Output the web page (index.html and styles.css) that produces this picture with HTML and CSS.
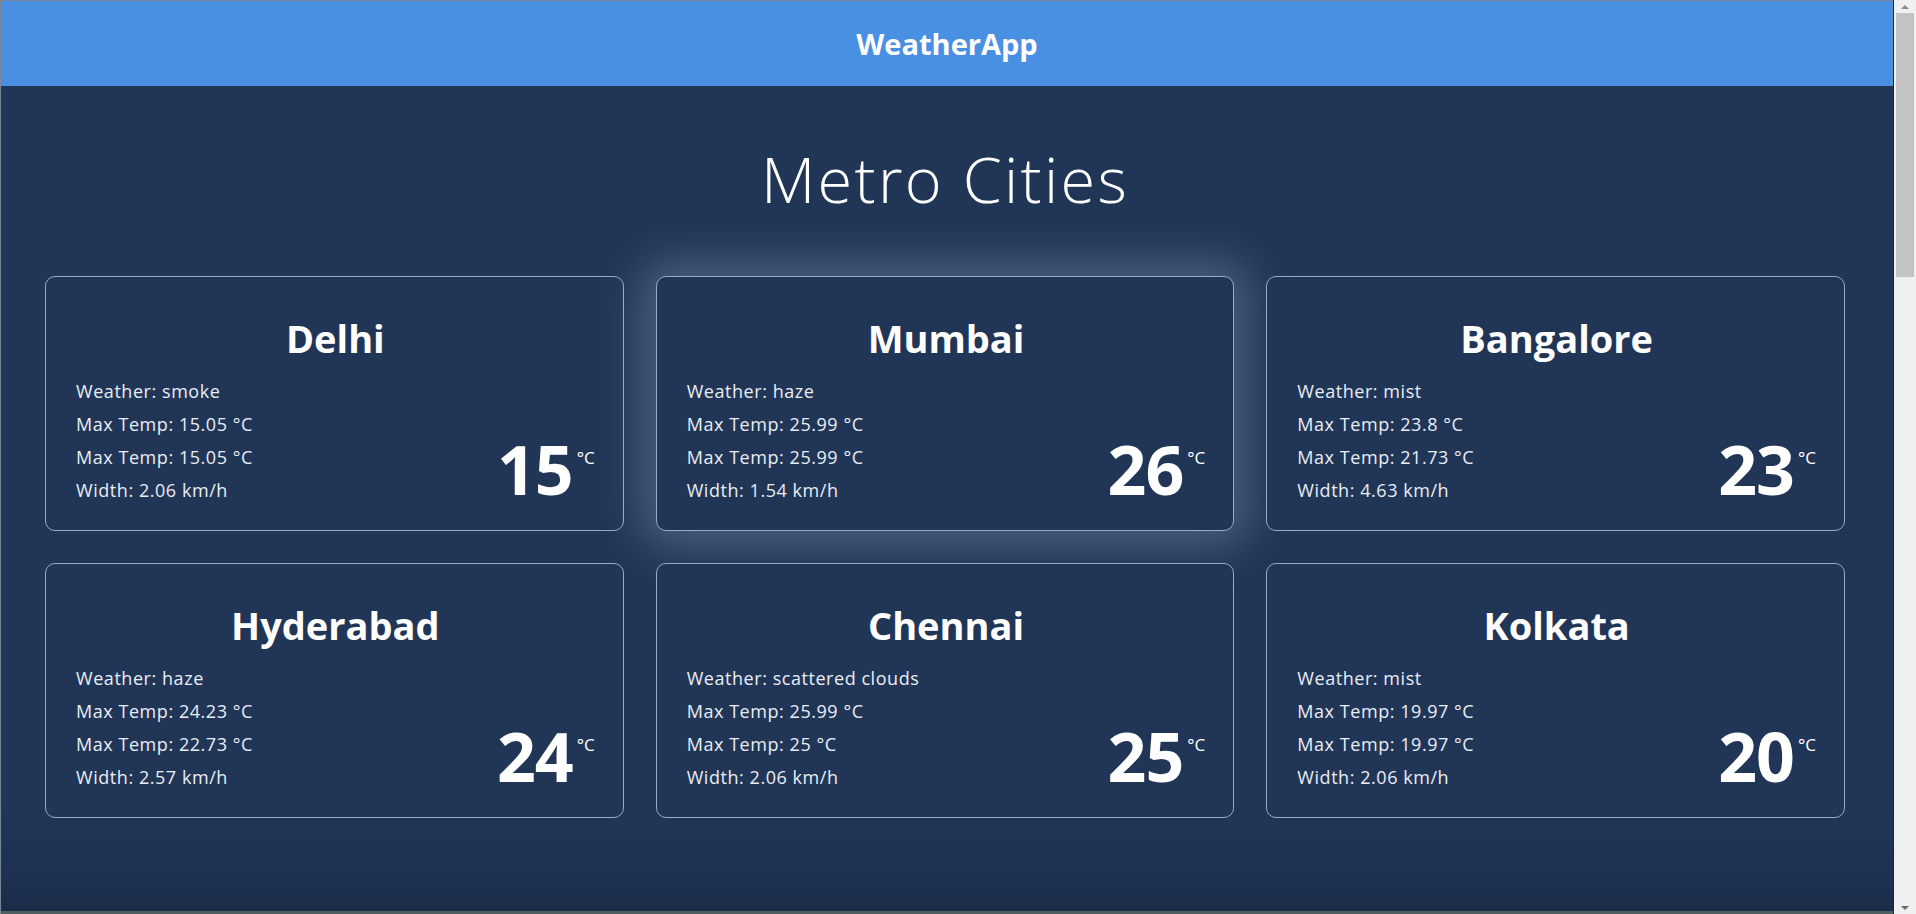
FILE: index.html
```html
<!DOCTYPE html>
<html lang="en">
<head>
<meta charset="utf-8">
<title>WeatherApp</title>
<link rel="stylesheet" href="styles.css">
</head>
<body>
<div class="window">
  <div class="page">
    <header class="topbar">WeatherApp</header>
    <main class="content">
      <h1 class="page-title">Metro Cities</h1>
      <section class="grid">
        <article class="card">
          <h2 class="city">Delhi</h2>
          <div class="card-body">
            <ul class="details">
              <li>Weather: smoke</li>
              <li>Max Temp: 15.05 °C</li>
              <li>Max Temp: 15.05 °C</li>
              <li>Width: 2.06 km/h</li>
            </ul>
            <div class="temp"><span class="temp-value">15</span><span class="temp-unit">°C</span></div>
          </div>
        </article>
        <article class="card card-active">
          <h2 class="city">Mumbai</h2>
          <div class="card-body">
            <ul class="details">
              <li>Weather: haze</li>
              <li>Max Temp: 25.99 °C</li>
              <li>Max Temp: 25.99 °C</li>
              <li>Width: 1.54 km/h</li>
            </ul>
            <div class="temp"><span class="temp-value">26</span><span class="temp-unit">°C</span></div>
          </div>
        </article>
        <article class="card">
          <h2 class="city">Bangalore</h2>
          <div class="card-body">
            <ul class="details">
              <li>Weather: mist</li>
              <li>Max Temp: 23.8 °C</li>
              <li>Max Temp: 21.73 °C</li>
              <li>Width: 4.63 km/h</li>
            </ul>
            <div class="temp"><span class="temp-value">23</span><span class="temp-unit">°C</span></div>
          </div>
        </article>
        <article class="card">
          <h2 class="city">Hyderabad</h2>
          <div class="card-body">
            <ul class="details">
              <li>Weather: haze</li>
              <li>Max Temp: 24.23 °C</li>
              <li>Max Temp: 22.73 °C</li>
              <li>Width: 2.57 km/h</li>
            </ul>
            <div class="temp"><span class="temp-value">24</span><span class="temp-unit">°C</span></div>
          </div>
        </article>
        <article class="card">
          <h2 class="city">Chennai</h2>
          <div class="card-body">
            <ul class="details">
              <li>Weather: scattered clouds</li>
              <li>Max Temp: 25.99 °C</li>
              <li>Max Temp: 25 °C</li>
              <li>Width: 2.06 km/h</li>
            </ul>
            <div class="temp"><span class="temp-value">25</span><span class="temp-unit">°C</span></div>
          </div>
        </article>
        <article class="card">
          <h2 class="city">Kolkata</h2>
          <div class="card-body">
            <ul class="details">
              <li>Weather: mist</li>
              <li>Max Temp: 19.97 °C</li>
              <li>Max Temp: 19.97 °C</li>
              <li>Width: 2.06 km/h</li>
            </ul>
            <div class="temp"><span class="temp-value">20</span><span class="temp-unit">°C</span></div>
          </div>
        </article>
      </section>
    </main>
    <div class="bottom-edge"></div>
  </div>
  <div class="scrollbar">
    <div class="scroll-arrow scroll-up"></div>
    <div class="scroll-track"><div class="scroll-thumb"></div></div>
    <div class="scroll-arrow scroll-down"></div>
  </div>
</div>
</body>
</html>
```

FILE: styles.css
```css
* { box-sizing: border-box; }

html, body {
  margin: 0;
  padding: 0;
  height: 100%;
  overflow: hidden;
}

body {
  font-family: "Open Sans", "Noto Sans", "DejaVu Sans", sans-serif;
  background: #213657;
  color: #ffffff;
}

.window {
  display: flex;
  height: 914px;
}

.page {
  flex: 1;
  display: flex;
  flex-direction: column;
  background: #213657;
  min-width: 0;
  border-top: 1px solid #7c8594;
  border-left: 1px solid #7c8594;
}

.topbar {
  height: 85px;
  line-height: 85px;
  background: #4a90e2;
  text-align: center;
  font-weight: 700;
  font-size: 29px;
  color: #ffffff;
  flex-shrink: 0;
}

.content {
  flex: 1;
  display: flex;
  flex-direction: column;
  align-items: center;
  padding-right: 4px;
  background: linear-gradient(to bottom, #213657 0, #213657 88%, #1e3152 96%, #1b2c49 100%);
}

.page-title {
  margin: 56px 0 60px;
  font-weight: 300;
  font-size: 63px;
  line-height: 74px;
  letter-spacing: 2.3px;
  color: #ffffff;
}

.grid {
  width: 1800px;
  display: grid;
  grid-template-columns: repeat(3, 1fr);
  gap: 32px 32px;
}

.card {
  height: 255px;
  border: 1.5px solid #9aa9c5;
  border-radius: 10px;
  padding: 37px 28px 0 30px;
  background: #213657;
}

.card-active {
  box-shadow: 0 0 44px 14px rgba(190, 202, 222, 0.28);
}

.city {
  margin: 0 0 13px;
  text-align: center;
  font-size: 38px;
  line-height: 48px;
  font-weight: 700;
  color: #ffffff;
}

.card-body {
  display: flex;
  justify-content: space-between;
  align-items: flex-end;
}

.details {
  list-style: none;
  margin: 0;
  padding: 0;
  font-size: 18px;
  line-height: 33px;
  letter-spacing: 0.55px;
  color: #e9edf4;
}

.temp {
  display: flex;
  align-items: flex-start;
  margin-bottom: 4px;
}

.temp-value {
  font-size: 68px;
  line-height: 68px;
  font-weight: 700;
  letter-spacing: -1px;
  color: #ffffff;
}

.temp-unit {
  font-size: 17px;
  line-height: 18px;
  margin-top: 14px;
  margin-left: 4px;
  color: #ffffff;
}

.bottom-edge {
  height: 3px;
  flex-shrink: 0;
  background: #4f6062;
}

.scrollbar {
  width: 23px;
  flex-shrink: 0;
  display: flex;
  flex-direction: column;
  background: #f0f0f3;
  border-left: 1px solid #1a2640;
}

.scroll-arrow {
  height: 13px;
  position: relative;
}

.scroll-up::after,
.scroll-down::after {
  content: "";
  position: absolute;
  left: 7px;
  top: 5px;
  border-left: 4px solid transparent;
  border-right: 4px solid transparent;
}

.scroll-up::after { border-bottom: 4px solid #8a8a8a; }
.scroll-down::after { border-top: 4px solid #6a6a6a; }

.scroll-track {
  flex: 1;
  padding: 0 2px;
}

.scroll-thumb {
  height: 264px;
  background: #c3c3c6;
}
```
